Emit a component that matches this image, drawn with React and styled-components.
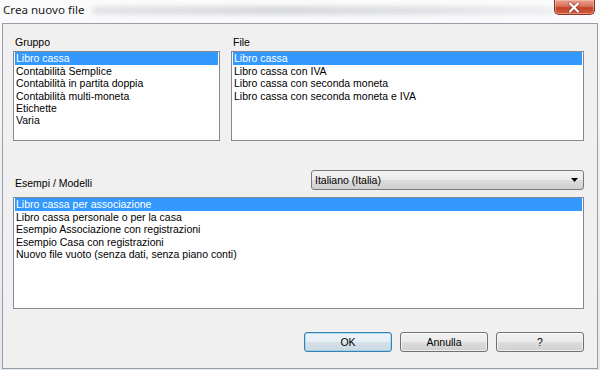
import React from "react";
import styled, { createGlobalStyle } from "styled-components";

const Global = createGlobalStyle`
  html, body { margin: 0; padding: 0; }
  body { width: 600px; height: 370px; overflow: hidden; background: #e9edf3; }
  * { box-sizing: border-box; }
`;

const Frame = styled.div`
  width: 600px;
  height: 370px;
  display: flex;
  flex-direction: column;
  background: linear-gradient(180deg, #fbfbfc 0%, #f4f5f7 20%, #e4e8ef 100%);
  font-family: "Liberation Sans", Arial, sans-serif;
  color: #000;
`;

const TitleBar = styled.div`
  height: 23px;
  display: flex;
  align-items: flex-start;
  padding-left: 3px;
`;

const Title = styled.div`
  font-family: "Noto Sans", "DejaVu Sans", sans-serif;
  font-size: 11.6px;
  line-height: 20px;
  color: #1a1a1a;
  white-space: nowrap;
`;

const Haze = styled.div`
  margin-left: 8px;
  margin-top: 6px;
  width: 470px;
  height: 9px;
  border-radius: 4px;
  background: linear-gradient(90deg, rgba(120,125,135,0.16), rgba(120,125,135,0.26) 40%, rgba(120,125,135,0.2) 70%, rgba(120,125,135,0.08));
  filter: blur(2px);
`;

const CloseButton = styled.div`
  margin-left: auto;
  margin-right: 5px;
  width: 42px;
  height: 15px;
  border: 1px solid #8b3023;
  border-top: none;
  border-radius: 0 0 5px 5px;
  background: linear-gradient(180deg, #eaa08f 0%, #d8705a 45%, #c2412a 55%, #cf5c40 100%);
  box-shadow: inset 0 0 0 1px rgba(255, 210, 200, 0.45);
  display: flex;
  align-items: center;
  justify-content: center;
`;

const Client = styled.div`
  flex: 1;
  margin: 0 2px 1px 2px;
  border: 1px solid #9a9ea6;
  background: #f0f0f0;
  padding: 12px 13px 15px 10px;
  display: flex;
  flex-direction: column;
`;

const TopRow = styled.div`
  display: grid;
  grid-template-columns: 207px 1fr;
  column-gap: 11px;
`;

const Field = styled.div`
  display: flex;
  flex-direction: column;
  gap: 2px;
`;

const Label = styled.div`
  font-size: 10.5px;
  line-height: 13px;
  padding-left: 2px;
  white-space: nowrap;
`;

const ListBox = styled.div`
  height: ${(p) => p.$h}px;
  background: #fff;
  border: 1px solid #828790;
  padding: 0 1px;
  overflow: hidden;
`;

const Item = styled.div`
  font-size: 10.5px;
  line-height: 12.3px;
  height: 12.3px;
  white-space: nowrap;
  padding-left: 1px;
  background: ${(p) => (p.$sel ? "#3399ff" : "transparent")};
  color: ${(p) => (p.$sel ? "#fff" : "#000")};
  &:first-child { height: 13px; line-height: 13px; }
`;

const MidRow = styled.div`
  margin-top: 29px;
  height: 20px;
  display: flex;
  align-items: flex-end;
  justify-content: space-between;
`;

const Combo = styled.div`
  width: 273px;
  height: 20px;
  border: 1px solid #7a7a7a;
  border-radius: 3px;
  background: linear-gradient(180deg, #f2f2f2 0%, #ebebeb 48%, #dddddd 52%, #cfcfcf 100%);
  display: flex;
  align-items: center;
  padding: 0 5px 0 3px;
  font-size: 10.5px;
`;

const ComboText = styled.span`
  flex: 1;
`;

const BottomList = styled.div`
  margin-top: 7px;
`;

const ButtonRow = styled.div`
  margin-top: 23px;
  display: flex;
  justify-content: flex-end;
  gap: 8px;
`;

const Button = styled.div`
  width: 88px;
  height: 20px;
  border: 1px solid ${(p) => (p.$def ? "#3c7fb1" : "#707070")};
  border-radius: 3px;
  background: ${(p) =>
    p.$def
      ? "linear-gradient(180deg, #eef4f8 0%, #e6eef4 48%, #d6e2ea 52%, #c9d8e2 100%)"
      : "linear-gradient(180deg, #f2f2f2 0%, #ebebeb 48%, #dddddd 52%, #cfcfcf 100%)"};
  box-shadow: inset 0 0 0 1px ${(p) => (p.$def ? "rgba(120,200,240,0.55)" : "rgba(255,255,255,0.65)")};
  display: flex;
  align-items: center;
  justify-content: center;
  font-size: 10.5px;
`;

const gruppo = [
  "Libro cassa",
  "Contabilità Semplice",
  "Contabilità in partita doppia",
  "Contabilità multi-moneta",
  "Etichette",
  "Varia",
];

const files = [
  "Libro cassa",
  "Libro cassa con IVA",
  "Libro cassa con seconda moneta",
  "Libro cassa con seconda moneta e IVA",
];

const esempi = [
  "Libro cassa per associazione",
  "Libro cassa personale o per la casa",
  "Esempio Associazione con registrazioni",
  "Esempio Casa con registrazioni",
  "Nuovo file vuoto (senza dati, senza piano conti)",
];

function List({ items, h }) {
  return (
    <ListBox $h={h}>
      {items.map((t, i) => (
        <Item key={t} $sel={i === 0}>
          {t}
        </Item>
      ))}
    </ListBox>
  );
}

export default function App() {
  return (
    <>
      <Global />
      <Frame>
        <TitleBar>
          <Title>Crea nuovo file</Title>
          <Haze />
          <CloseButton>
            <svg width="14" height="11" viewBox="0 0 14 11">
              <path
                d="M3 1.5 L11 9.5 M11 1.5 L3 9.5"
                stroke="#6b1f14"
                strokeWidth="3.6"
                strokeLinecap="round"
                opacity="0.55"
              />
              <path
                d="M3 1.5 L11 9.5 M11 1.5 L3 9.5"
                stroke="#fff"
                strokeWidth="2.2"
                strokeLinecap="round"
              />
            </svg>
          </CloseButton>
        </TitleBar>
        <Client>
          <TopRow>
            <Field>
              <Label>Gruppo</Label>
              <List items={gruppo} h={90} />
            </Field>
            <Field>
              <Label>File</Label>
              <List items={files} h={90} />
            </Field>
          </TopRow>
          <MidRow>
            <Label>Esempi / Modelli</Label>
            <Combo>
              <ComboText>Italiano (Italia)</ComboText>
              <svg width="7" height="4" viewBox="0 0 7 4">
                <path d="M0 0 H7 L3.5 4 Z" fill="#000" />
              </svg>
            </Combo>
          </MidRow>
          <BottomList>
            <List items={esempi} h={112} />
          </BottomList>
          <ButtonRow>
            <Button $def>OK</Button>
            <Button>Annulla</Button>
            <Button>?</Button>
          </ButtonRow>
        </Client>
      </Frame>
    </>
  );
}
